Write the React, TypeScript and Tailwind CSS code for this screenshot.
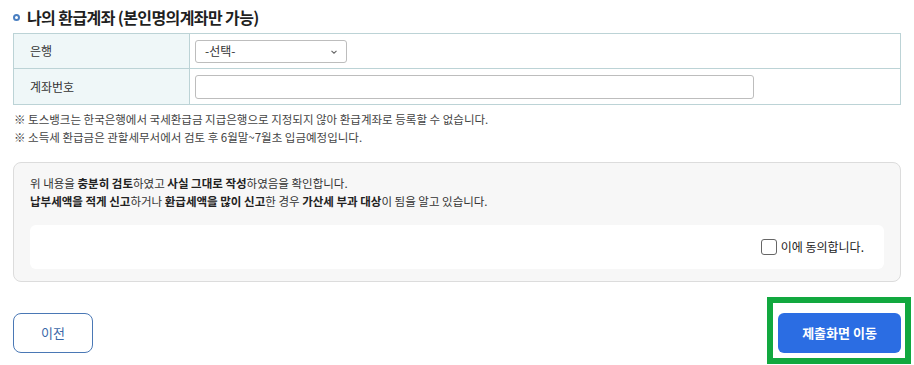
import React, { useState } from 'react';

export default function App() {
  const [agree, setAgree] = useState(false);
  const [account, setAccount] = useState('');

  return (
    <div className="w-[914px] h-[365px] overflow-hidden bg-white px-[13px] text-[#222] font-['Noto_Sans_CJK_KR',sans-serif]">
      {/* title */}
      <div className="h-[33px] flex items-center gap-[7px]">
        <span className="w-[7px] h-[7px] rounded-full border-2 border-[#4a7fc1] mt-[1px]" />
        <h2 className="text-[16px] font-bold tracking-[-0.6px] text-[#1f1f1f]">
          나의 환급계좌 (본인명의계좌만 가능)
        </h2>
      </div>

      {/* account table */}
      <div className="border border-[#bcd3d6] text-[12px] text-[#333]">
        <div className="grid grid-cols-[176px_1fr] h-[35px] border-b border-[#bcd3d6]">
          <div className="bg-[#eff7f8] border-r border-[#bcd3d6] flex items-center pl-[16px]">
            은행
          </div>
          <div className="flex items-center pl-[5px]">
            <div className="w-[152px] h-[23px] border border-[#bdbdbd] rounded-[3px] flex items-center justify-between pl-[9px] pr-[8px] bg-white">
              <span className="text-[12px] text-[#333]">-선택-</span>
              <svg width="8" height="6" viewBox="0 0 8 6" className="mt-[1px]">
                <path d="M1.5 1.8 L4 4.2 L6.5 1.8" fill="none" stroke="#666" strokeWidth="1.1" />
              </svg>
            </div>
          </div>
        </div>
        <div className="grid grid-cols-[176px_1fr] h-[35px]">
          <div className="bg-[#eff7f8] border-r border-[#bcd3d6] flex items-center pl-[16px]">
            계좌번호
          </div>
          <div className="flex items-center pl-[5px]">
            <input
              value={account}
              onChange={(e) => setAccount(e.target.value)}
              className="w-[559px] h-[24px] border border-[#bdbdbd] rounded-[3px] px-2 text-[12px] outline-none"
            />
          </div>
        </div>
      </div>

      {/* notes */}
      <div className="mt-[5px] pl-[1px] text-[11.5px] leading-[18px] text-[#444]">
        <p>※ 토스뱅크는 한국은행에서 국세환급금 지급은행으로 지정되지 않아 환급계좌로 등록할 수 없습니다.</p>
        <p>※ 소득세 환급금은 관할세무서에서 검토 후 6월말~7월초 입금예정입니다.</p>
      </div>

      {/* consent */}
      <div className="mt-[16px] bg-[#f7f7f7] border border-[#dcdcdc] rounded-[8px] px-[16px] pt-[11px] pb-[12px]">
        <div className="text-[11.5px] leading-[18px] text-[#333]">
          <p>
            위 내용을 <b className="text-[#222]">충분히 검토</b>하였고 <b className="text-[#222]">사실 그대로 작성</b>하였음을 확인합니다.
          </p>
          <p>
            <b className="text-[#222]">납부세액을 적게 신고</b>하거나 <b className="text-[#222]">환급세액을 많이 신고</b>한 경우{' '}
            <b className="text-[#222]">가산세 부과 대상</b>이 됨을 알고 있습니다.
          </p>
        </div>
        <div className="mt-[15px] h-[44px] bg-white rounded-[6px] flex items-center justify-end pr-[20px]">
          <label className="flex items-center gap-[4px] cursor-pointer">
            <input
              type="checkbox"
              checked={agree}
              onChange={(e) => setAgree(e.target.checked)}
              className="appearance-none w-[16px] h-[16px] border border-[#666] rounded-[3px] bg-white checked:bg-[#2b6de3] checked:border-[#2b6de3]"
            />
            <span className="text-[12px] text-[#222]">이에 동의합니다.</span>
          </label>
        </div>
      </div>

      {/* buttons */}
      <div className="mt-[15px] flex items-start justify-between">
        <button className="mt-[16px] w-[80px] h-[40px] border border-[#4a78b5] rounded-[8px] bg-white text-[13px] text-[#3b68a8]">
          이전
        </button>
        <div className="-mr-[10px] border-[6px] border-[#11a83f] pt-[10px] pb-[5px] pl-[5px] pr-[4px]">
          <button className="w-[123px] h-[40px] rounded-[6px] bg-[#2b6de3] text-white text-[13px] font-bold">
            제출화면 이동
          </button>
        </div>
      </div>
    </div>
  );
}
